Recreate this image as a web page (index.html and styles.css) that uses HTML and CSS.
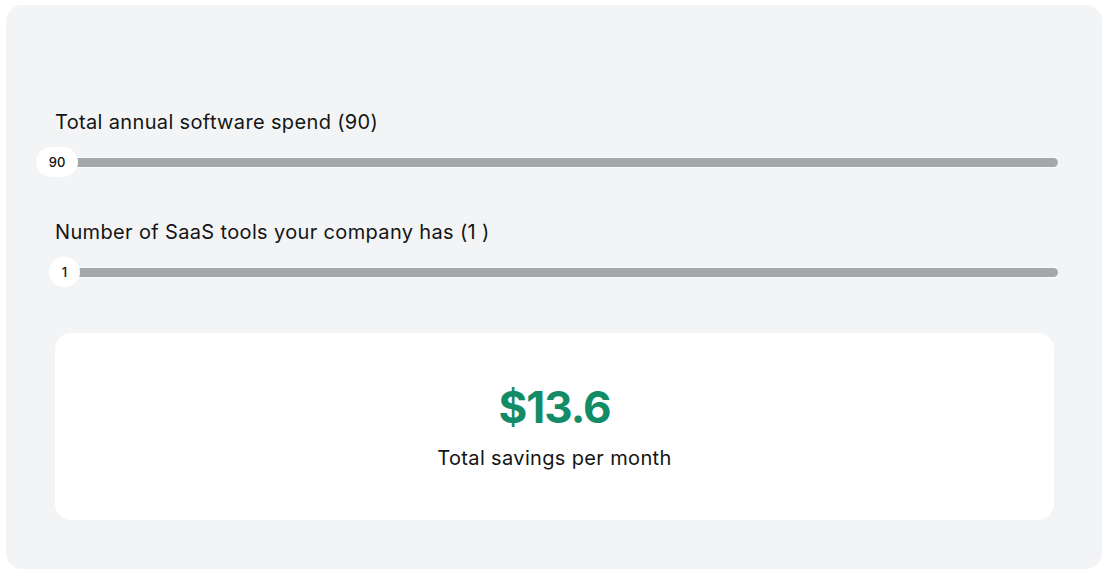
FILE: index.html
```html
<!DOCTYPE html>
<html>
<head>
<meta charset="utf-8">
<link rel="stylesheet" href="styles.css">
</head>
<body>
<div class="panel">
  <div class="field">
    <div class="label">Total annual software spend (90)</div>
    <div class="slider">
      <div class="track"></div>
      <div class="thumb thumb-a">90</div>
    </div>
  </div>
  <div class="field field-2">
    <div class="label">Number of SaaS tools your company has (1 )</div>
    <div class="slider">
      <div class="track"></div>
      <div class="thumb thumb-b">1</div>
    </div>
  </div>
  <div class="card">
    <div class="amount">$13.6</div>
    <div class="caption">Total savings per month</div>
  </div>
</div>
</body>
</html>
```
FILE: styles.css
```css
html, body { margin: 0; padding: 0; background: #ffffff; }
body { font-family: Inter, "Noto Sans", sans-serif; color: #141414; }
.panel {
  margin: 5px 6px 7px 6px;
  height: 564px;
  box-sizing: border-box;
  background: #f3f4f6;
  border-radius: 16px;
  padding: 103px 46px 0 49px;
}
.field { display: flex; flex-direction: column; gap: 11px; }
.field-2 { margin-top: 41px; }
.label { font-size: 20px; line-height: 28px; font-weight: 400; letter-spacing: 0.35px; }
.slider { position: relative; height: 30px; display: flex; align-items: center; }
.track {
  flex: 1;
  margin-left: 18px;
  margin-right: -2px;
  height: 9px;
  border-radius: 5px;
  background: #a5a7ab;
  box-shadow: 0 0 0 1px #fbfbfc;
}
.thumb {
  position: absolute;
  top: 0;
  height: 30px;
  border-radius: 15px;
  background: #ffffff;
  font-size: 13px;
  font-weight: 500;
  line-height: 30px;
  text-align: center;
  color: #111;
}
.thumb-a { left: -19px; width: 42px; }
.thumb-b { left: -6px; width: 31px; }
.card {
  margin-top: 46px;
  margin-right: 2px;
  height: 187px;
  background: #ffffff;
  border-radius: 16px;
  display: flex;
  flex-direction: column;
  align-items: center;
  justify-content: center;
  padding-top: 0;
  box-sizing: border-box;
}
.amount {
  font-size: 44px;
  line-height: 52px;
  font-weight: 700;
  color: #128c67;
  letter-spacing: -1px;
}
.caption { font-size: 20px; line-height: 28px; margin-top: 11px; letter-spacing: 0.35px; }
```
